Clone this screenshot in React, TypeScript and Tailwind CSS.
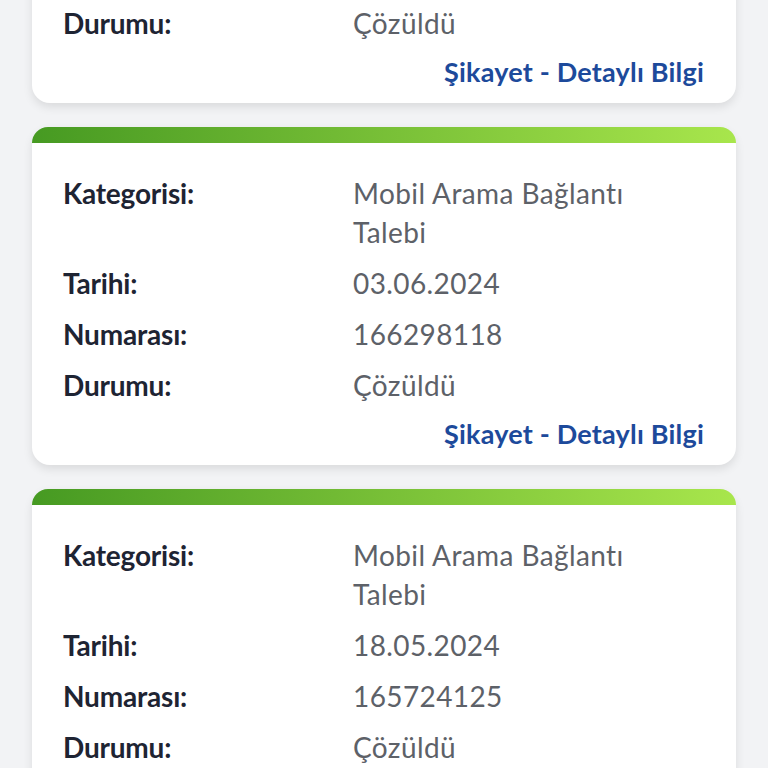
const complaints = [
  { tarih: "10.06.2024", numara: "166512034" },
  { tarih: "03.06.2024", numara: "166298118" },
  { tarih: "18.05.2024", numara: "165724125" },
]

function Row({ label, value }: { label: string; value: React.ReactNode }) {
  return (
    <div className="flex">
      <div className="w-[290px] shrink-0 text-[28px] leading-[39px] font-bold tracking-[-0.2px] text-[#1e2433]">{label}</div>
      <div className="flex-1 text-[28px] leading-[39px] tracking-[0.4px] text-[#5d6168]">{value}</div>
    </div>
  )
}

function ComplaintCard({ tarih, numara, className = "" }: { tarih: string; numara: string; className?: string }) {
  return (
    <div className={`rounded-[18px] bg-white shadow-[0_4px_10px_rgba(0,0,0,0.10)] ${className}`}>
      <div className="h-4 rounded-t-[18px] bg-gradient-to-r from-[#469a22] to-[#a8e64c]"></div>
      <div className="flex flex-col gap-3 pl-[31px] pr-[32px] pt-[31px] pb-[13px]">
        <Row
          label="Kategorisi:"
          value={
            <>
              Mobil Arama Bağlantı
              <br />
              Talebi
            </>
          }
        />
        <Row label="Tarihi:" value={tarih} />
        <Row label="Numarası:" value={numara} />
        <Row label="Durumu:" value="Çözüldü" />
        <div className="-mt-[1px] text-right text-[27px] leading-[36px] font-bold tracking-[0.2px] text-[#1d4a9b]">
          Şikayet - Detaylı Bilgi
        </div>
      </div>
    </div>
  )
}

export default function App() {
  return (
    <div
      className="h-[768px] w-[768px] overflow-hidden bg-[#f2f3f5]"
      style={{ fontFamily: "Lato, 'Noto Sans', sans-serif" }}
    >
      <div className="flex flex-col gap-6 px-8">
        {complaints.map((c, i) => (
          <ComplaintCard key={i} tarih={c.tarih} numara={c.numara} className={i === 0 ? "-mt-[235px]" : ""} />
        ))}
      </div>
    </div>
  )
}
